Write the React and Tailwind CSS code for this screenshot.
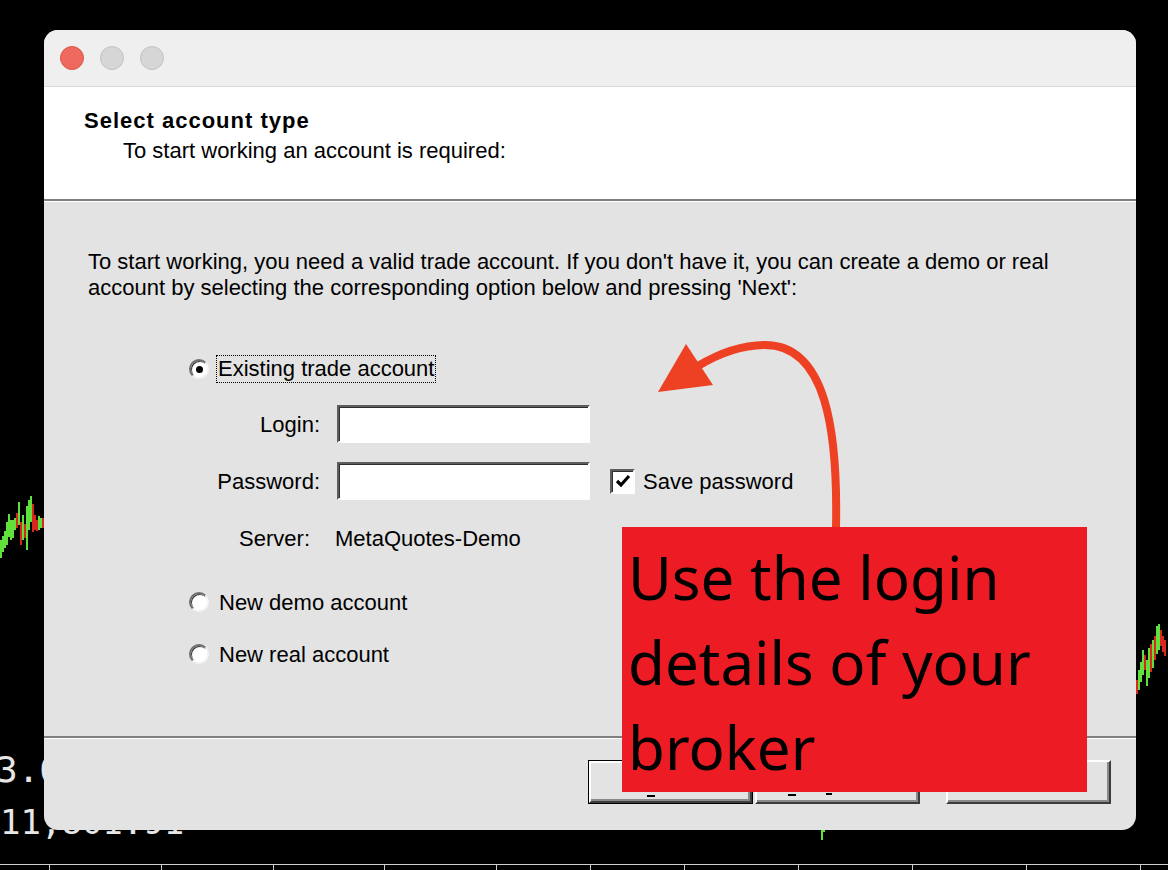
import React from 'react';

const G = '#5fe03a';
const R = '#d8281d';

// little candle bits peeking out behind the dialog
const leftBars = [
  [0, 540, 558, G], [2, 536, 552, G], [4, 531, 548, G], [6, 522, 545, G], [8, 514, 537, G],
  [10, 520, 540, G], [12, 520, 538, G], [14, 518, 530, G], [16, 513, 528, R], [18, 502, 525, G],
  [20, 522, 545, R], [22, 515, 540, G], [24, 524, 538, R], [26, 506, 550, G], [28, 500, 530, G],
  [30, 496, 522, G], [32, 504, 532, R], [34, 515, 530, R], [36, 520, 531, R], [38, 516, 530, G],
  [40, 518, 528, G], [42, 518, 528, R],
];

const rightBars = [
  [1136, 680, 694, R], [1138, 670, 690, G], [1140, 662, 682, G], [1142, 650, 675, G], [1144, 655, 670, R],
  [1146, 660, 686, G], [1148, 648, 678, G], [1150, 644, 672, R], [1152, 640, 668, G], [1154, 636, 660, R],
  [1156, 626, 654, G], [1158, 624, 650, G], [1160, 630, 646, R], [1162, 636, 652, R], [1164, 640, 656, R],
];

const ticks = [49, 161, 273, 384, 496, 590, 684, 798, 912, 1026, 1140];

const Radio = ({ checked }) => (
  <div className="w-[20px] h-[20px] rounded-full bg-white border-2 border-t-[#6e6e6e] border-l-[#6e6e6e] border-b-[#f4f4f4] border-r-[#f4f4f4] shadow-[inset_1px_1px_0_#3c3c3c] flex items-center justify-center shrink-0">
    {checked && <div className="w-[7px] h-[7px] rounded-full bg-black" />}
  </div>
);

const Field = () => (
  <div className="w-[253px] h-[38px] border-t-2 border-l-2 border-t-[#5e5e5e] border-l-[#5e5e5e] border-b-2 border-r-2 border-b-white border-r-white bg-white shadow-[inset_1px_1px_0_#2e2e2e]" />
);

const Button = ({ children, isDefault }) => (
  <div className={`${isDefault ? 'border border-black' : ''} h-[44px] w-[165px]`}>
    <div className="relative h-full w-full border-t-2 border-l-2 border-t-white border-l-white border-b-2 border-r-2 border-b-[#3c3c3c] border-r-[#3c3c3c] shadow-[inset_-2px_-2px_0_#8a8a8a] bg-[#e3e3e3]">
      {children}
    </div>
  </div>
);

export default function App() {
  return (
    <div className="relative w-[1168px] h-[870px] bg-black overflow-hidden font-['Liberation_Sans',Arial,sans-serif]">
      {/* chart behind the window */}
      <svg className="absolute left-0 top-0" width="1168" height="870">
        {leftBars.map(([x, a, b, c], i) => (
          <rect key={'l' + i} x={x} y={a} width="2" height={b - a} fill={c} />
        ))}
        {rightBars.map(([x, a, b, c], i) => (
          <rect key={'r' + i} x={x} y={a} width="2" height={b - a} fill={c} />
        ))}
        <rect x="821" y="826" width="2" height="14" fill={G} />
        <rect x="823" y="829" width="2" height="3" fill={G} />
        <rect x="0" y="864" width="1168" height="1" fill="#cfcfcf" />
        {ticks.map((x) => (
          <rect key={x} x={x} y="864" width="1" height="6" fill="#cfcfcf" />
        ))}
      </svg>
      <div className="absolute left-[-4px] top-[750px] text-[36px] leading-[40px] text-[#e6e6e6] font-['DejaVu_Sans_Mono',monospace]">
        3.6
      </div>
      <div className="absolute left-0 top-[802px] text-[34px] leading-[40px] text-[#e6e6e6] font-['DejaVu_Sans_Mono',monospace]">
        11,801.91
      </div>

      {/* dialog window */}
      <div className="absolute left-[44px] top-[30px] w-[1092px] h-[800px] rounded-[14px] overflow-hidden flex flex-col bg-[#e3e3e3]">
        <div className="h-[57px] bg-[#efefef] border-b border-[#d8d8d8] flex items-center gap-[16px] pl-[16px] shrink-0">
          <div className="w-[24px] h-[24px] rounded-full bg-[#ee6a5f] border border-[#d9564b]" />
          <div className="w-[24px] h-[24px] rounded-full bg-[#d6d6d6] border border-[#c2c2c2]" />
          <div className="w-[24px] h-[24px] rounded-full bg-[#d6d6d6] border border-[#c2c2c2]" />
        </div>

        <div className="h-[112px] bg-white pl-[40px] pt-[20px] shrink-0 text-[22px] leading-[28px] text-black">
          <div className="font-bold tracking-[1px]">Select account type</div>
          <div className="pl-[39px] mt-[2px]">To start working an account is required:</div>
        </div>
        <div className="h-[2px] bg-[#808080] shrink-0" />
        <div className="h-[1px] bg-white shrink-0" />

        <div className="flex-1 text-[22px] text-black">
          <p className="pl-[44px] pt-[47px] leading-[26px] w-[1040px]">
            To start working, you need a valid trade account. If you don't have it, you can create a demo or real account by selecting the corresponding option below and pressing 'Next':
          </p>

          <div className="pl-[145px] flex flex-col">
            <div className="h-[30px] mt-[53px] flex items-center">
              <Radio checked />
              <div className="ml-[7px] px-[1px] border border-dotted border-black leading-[26px]">Existing trade account</div>
            </div>

            <div className="h-[38px] mt-[21px] flex items-center">
              <div className="w-[131px] text-right">Login:</div>
              <div className="ml-[17px]"><Field /></div>
            </div>

            <div className="h-[38px] mt-[19px] flex items-center">
              <div className="w-[131px] text-right">Password:</div>
              <div className="ml-[17px]"><Field /></div>
              <div className="ml-[20px] w-[25px] h-[25px] bg-white border-2 border-t-[#5e5e5e] border-l-[#5e5e5e] border-b-white border-r-white shadow-[inset_1px_1px_0_#2e2e2e] flex items-center justify-center">
                <svg width="16" height="14" viewBox="0 0 16 14">
                  <path d="M2 7 L6 11 L14 2" fill="none" stroke="black" strokeWidth="3.2" />
                </svg>
              </div>
              <div className="ml-[8px]">Save password</div>
            </div>

            <div className="h-[30px] mt-[23px] flex items-center">
              <div className="w-[121px] text-right">Server:</div>
              <div className="ml-[25px]">MetaQuotes-Demo</div>
            </div>

            <div className="h-[30px] mt-[34px] flex items-center">
              <Radio />
              <div className="ml-[10px]">New demo account</div>
            </div>

            <div className="h-[30px] mt-[22px] flex items-center">
              <Radio />
              <div className="ml-[10px]">New real account</div>
            </div>
          </div>
        </div>

        <div className="h-[2px] bg-[#808080] shrink-0" />
        <div className="h-[1px] bg-white shrink-0" />
        <div className="h-[91px] shrink-0 flex items-start justify-end pt-[21px] pr-[25px]">
          {/* labels sit under the red note; only the mnemonic underlines peek out */}
          <Button isDefault>
            <div className="absolute left-[56px] top-[32px] w-[8px] h-[2px] bg-black" />
          </Button>
          <div className="ml-[2px]">
            <Button>
              <div className="absolute left-[31px] top-[32px] w-[8px] h-[2px] bg-black" />
              <div className="absolute left-[69px] top-[31px] w-[6px] h-[2px] bg-black" />
            </Button>
          </div>
          <div className="ml-[26px]">
            <Button />
          </div>
        </div>
      </div>

      {/* annotation */}
      <svg className="absolute left-0 top-0 pointer-events-none" width="1168" height="870">
        <path
          d="M836 528 C 838 430, 826 345, 765 345 C 740 345, 718 354, 698 366"
          fill="none"
          stroke="#ee4123"
          strokeWidth="8"
        />
        <polygon points="686,344 658,392 713,385" fill="#ee4123" />
      </svg>
      <div className="absolute left-[622px] top-[527px] w-[465px] h-[265px] bg-[#ed1c24] pl-[6px] pt-[8px] text-[60px] leading-[85px] text-black font-['Noto_Sans',sans-serif]">
        Use the login details of your broker
      </div>
    </div>
  );
}
